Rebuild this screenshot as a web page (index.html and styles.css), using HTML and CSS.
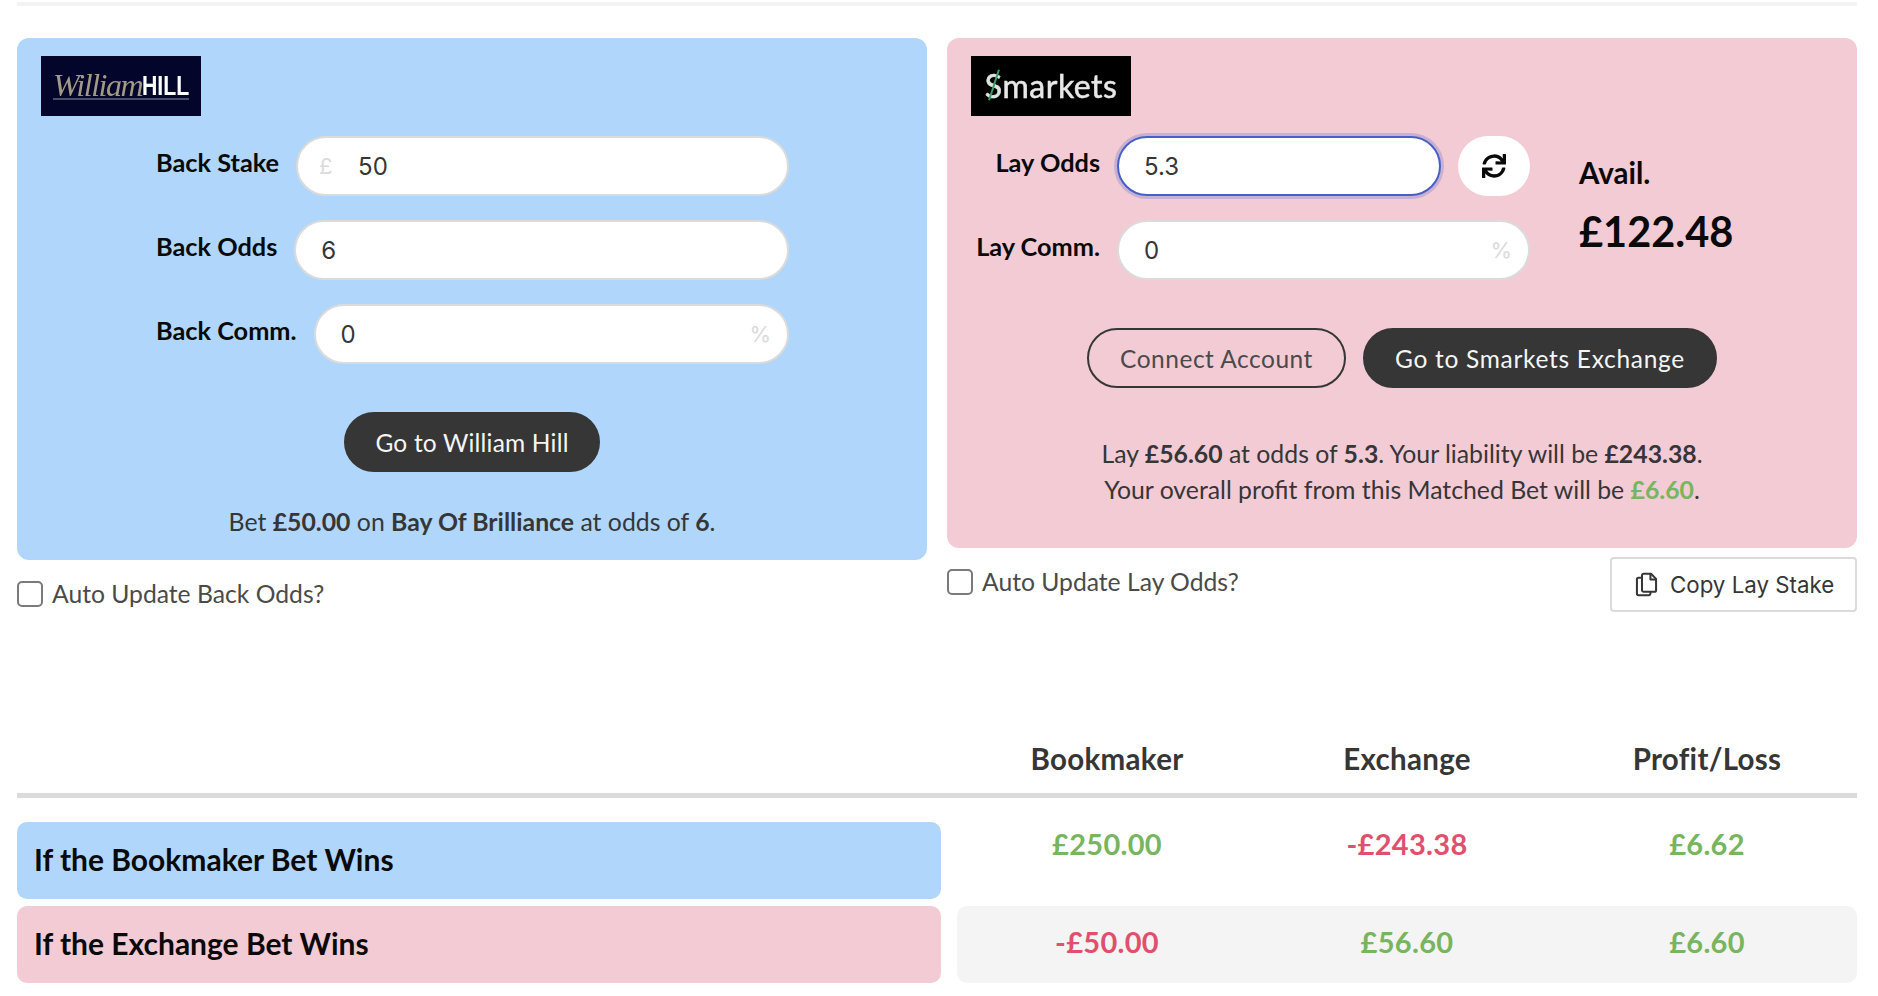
FILE: index.html
```html
<!DOCTYPE html>
<html lang="en">
  <head>
    <meta charset="UTF-8" />
    <meta name="viewport" content="width=device-width, initial-scale=1.0" />
    <title>Matched Bet Calculator</title>
    <link rel="stylesheet" href="styles.css">
  </head>
  <body>
    <div class="page">
      <div class="topRule"></div>

      <div class="calc">
        <!-- bookmaker side -->
        <div class="side">
          <div class="card cardBack">
            <div class="logo logoHill">
              <span class="hillScript">William</span><span class="hillBold"><span class="hillSquash">HILL</span></span>
            </div>
            <div class="backForm">
              <div class="field">
                <label class="fieldLabel">Back Stake</label>
                <div class="control">
                  <span class="affix affixLeft">£</span>
                  <input class="input inputPound" value="50" />
                </div>
              </div>
              <div class="field">
                <label class="fieldLabel">Back Odds</label>
                <div class="control">
                  <input class="input" value="6" />
                </div>
              </div>
              <div class="field">
                <label class="fieldLabel">Back Comm.</label>
                <div class="control">
                  <input class="input" value="0" />
                  <span class="affix affixRight">%</span>
                </div>
              </div>
            </div>
            <div class="actions actionsBack">
              <button class="btn btnDark btnHill">Go to William Hill</button>
            </div>
            <p class="summary summaryBack">Bet <b>£50.00</b> on <b>Bay Of Brilliance</b> at odds of <b>6</b>.</p>
          </div>
          <label class="check checkBack">
            <input type="checkbox" class="checkBox" />
            <span>Auto Update Back Odds?</span>
          </label>
        </div>

        <!-- exchange side -->
        <div class="side">
          <div class="card cardLay">
            <div class="logo logoSmarkets"><span class="smS">S<span class="smSlash"></span></span>markets</div>
            <div class="layTop">
              <div class="layForm">
                <div class="field">
                  <label class="fieldLabel layLabel">Lay Odds</label>
                  <div class="control">
                    <input class="input inputFocus" value="5.3" />
                  </div>
                  <button class="refresh" aria-label="Refresh">
                    <svg viewBox="0 0 512 512" width="24" height="24"><path fill="#0a0a0a" d="M440.65 12.57l4 82.77A247.16 247.16 0 0 0 255.83 8C134.73 8 33.91 94.92 12.29 209.82A12 12 0 0 0 24.09 224h49.05a12 12 0 0 0 11.67-9.26 175.91 175.91 0 0 1 317-56.94l-101.46-4.86a12 12 0 0 0-12.57 12v47.41a12 12 0 0 0 12 12H500a12 12 0 0 0 12-12V12a12 12 0 0 0-12-12h-47.37a12 12 0 0 0-11.98 12.57zM255.83 432a175.61 175.61 0 0 1-146-77.8l101.8 4.87a12 12 0 0 0 12.57-12v-47.4a12 12 0 0 0-12-12H12a12 12 0 0 0-12 12V500a12 12 0 0 0 12 12h47.35a12 12 0 0 0 12-12.6l-4.15-82.57A247.17 247.17 0 0 0 255.83 504c121.11 0 221.93-86.92 243.55-201.82a12 12 0 0 0-11.8-14.18h-49.05a12 12 0 0 0-11.67 9.26A175.86 175.86 0 0 1 255.83 432z"/></svg>
                  </button>
                </div>
                <div class="field">
                  <label class="fieldLabel layLabel">Lay Comm.</label>
                  <div class="control">
                    <input class="input" value="0" />
                    <span class="affix affixRight">%</span>
                  </div>
                </div>
              </div>
              <div class="avail">
                <div class="availLabel">Avail.</div>
                <div class="availValue">£122.48</div>
              </div>
            </div>
            <div class="actions actionsLay">
              <button class="btn btnOutline btnConnect">Connect Account</button>
              <button class="btn btnDark btnExchange">Go to Smarkets Exchange</button>
            </div>
            <p class="summary summaryLay">Lay <b>£56.60</b> at odds of <b>5.3</b>. Your liability will be <b>£243.38</b>.<br />Your overall profit from this Matched Bet will be <b class="pos">£6.60</b>.</p>
          </div>
          <div class="layFoot">
            <label class="check">
              <input type="checkbox" class="checkBox" />
              <span>Auto Update Lay Odds?</span>
            </label>
            <button class="copyBtn">
              <svg viewBox="0 0 24 24" width="27" height="27" fill="none" stroke="#363636" stroke-width="1.800" stroke-linejoin="round"><path d="M9.500 2.500h6.500l4.500 4.500v10a1.500 1.500 0 0 1-1.500 1.500H9.500A1.500 1.500 0 0 1 8 17V4a1.500 1.500 0 0 1 1.500-1.500z"/><path d="M15.500 2.500v5h5"/><path d="M8 6H5a1.500 1.500 0 0 0-1.500 1.500V20A1.500 1.500 0 0 0 5 21.500h9a1.500 1.500 0 0 0 1.500-1.500v-1.500"/></svg>
              <span>Copy Lay Stake</span>
            </button>
          </div>
        </div>
      </div>

      <div class="results">
        <div class="resultsHead">
          <div></div>
          <div class="headCell">Bookmaker</div>
          <div class="headCell">Exchange</div>
          <div class="headCell">Profit/Loss</div>
        </div>
        <div class="resultRow">
          <div class="rowName rowBack">If the Bookmaker Bet Wins</div>
          <div class="rowVals">
            <div class="val pos">£250.00</div>
            <div class="val neg">-£243.38</div>
            <div class="val pos">£6.62</div>
          </div>
        </div>
        <div class="resultRow">
          <div class="rowName rowLay">If the Exchange Bet Wins</div>
          <div class="rowVals rowGrey">
            <div class="val neg">-£50.00</div>
            <div class="val pos">£56.60</div>
            <div class="val pos">£6.60</div>
          </div>
        </div>
      </div>
    </div>
  </body>
</html>
```

FILE: styles.css
```css
* {
  box-sizing: border-box;
}
body {
  margin: 0;
  background: #fff;
  font-family: "Lato", "Liberation Sans", sans-serif;
  color: #363636;
}
.page {
  padding: 2px 21px 0 17px;
}
.topRule {
  height: 4px;
  background: #f3f3f3;
}
.calc {
  display: grid;
  grid-template-columns: 910px 910px;
  column-gap: 20px;
  margin-top: 32px;
  align-items: start;
}
.card {
  border-radius: 12px;
  padding: 18px 24px 0;
}
.cardBack {
  background: #b0d6fb;
  height: 522px;
}
.cardLay {
  background: #f2cbd5;
  height: 510px;
}

/* logos */
.logo {
  width: 160px;
  height: 60px;
  display: flex;
  align-items: center;
  justify-content: center;
}
.logoHill {
  background: #03052a;
  filter: blur(0.7px);
}
.hillScript {
  font-family: "Liberation Serif", serif;
  font-style: italic;
  font-size: 32px;
  letter-spacing: -1.5px;
  color: #a39a86;
  border-bottom: 2px solid #4d4f63;
  line-height: 25px;
  height: 27px;
}
.hillBold {
  width: 47px;
  font-family: "Liberation Sans", sans-serif;
  font-weight: bold;
  font-size: 28px;
  color: #fff;
  border-bottom: 2px solid #4d4f63;
  line-height: 25px;
  height: 27px;
}
.hillSquash {
  display: inline-block;
  transform: scaleX(0.76);
  transform-origin: left center;
}
.logoSmarkets {
  background: #000;
  padding-bottom: 2px;
  font-family: "Lato", sans-serif;
  font-size: 32px;
  color: #e8e8e8;
  letter-spacing: 0.5px;
  -webkit-text-stroke: 0.5px #e8e8e8;
  filter: blur(0.7px);
}
.smS {
  position: relative;
  color: #d9e8df;
}
.smSlash {
  position: absolute;
  left: 8px;
  top: 3px;
  width: 2px;
  height: 32px;
  background: #3f9a6a;
  transform: rotate(18deg);
}

/* form rows */
.backForm {
  width: 633px;
  margin: 20px 0 0 115px;
}
.field {
  display: flex;
  align-items: center;
  gap: 17px;
  margin-bottom: 24px;
}
.fieldLabel {
  font-weight: 700;
  font-size: 25.3px;
  color: #0a0a0a;
  white-space: nowrap;
  padding-bottom: 8px;
}
.control {
  position: relative;
  flex: 1;
}
.input {
  display: block;
  width: 100%;
  height: 60px;
  padding: 0 25px;
  border: 2px solid #dbdbdb;
  border-radius: 30px;
  background: #fff;
  font-family: "Inter", sans-serif;
  font-size: 24px;
  color: #363636;
  outline: none;
}
.inputPound {
  padding-left: 60px;
}
.inputFocus {
  border-color: #485fc7;
  box-shadow: 0 0 0 3px rgba(72, 95, 199, 0.25);
}
.affix {
  position: absolute;
  top: 0;
  height: 60px;
  display: flex;
  align-items: center;
  font-family: "Inter", sans-serif;
  font-size: 22px;
  color: #dbdbdb;
}
.affixLeft {
  left: 23px;
}
.affixRight {
  right: 18px;
}
.actions {
  display: flex;
  justify-content: center;
  gap: 17px;
}
.actionsBack {
  margin-top: 48px;
}
.actionsLay {
  margin: 24px 0 0;
}
.btn {
  height: 60px;
  padding: 0;
  border-radius: 30px;
  font-family: "Lato", sans-serif;
  font-size: 24.5px;
  letter-spacing: 0.5px;
  cursor: pointer;
}
.btnHill {
  width: 256px;
  letter-spacing: 0.2px;
}
.btnConnect {
  width: 259px;
}
.btnExchange {
  width: 354px;
  letter-spacing: 0.7px;
}
.btnDark {
  background: #363636;
  border: 2px solid #363636;
  color: #f5f5f5;
}
.btnOutline {
  background: transparent;
  border: 2px solid #363636;
  color: #4a4a4a;
}
.summary {
  margin: 0;
  text-align: center;
  font-size: 24.8px;
  line-height: 36px;
  color: #363636;
}
.summary b {
  font-weight: 700;
}
.summaryBack {
  margin-top: 32px;
}
.summaryLay {
  margin-top: 48px;
}

/* exchange top */
.layTop {
  display: flex;
  margin-top: 20px;
}
.layForm {
  width: 559px;
}
.layLabel {
  width: 129px;
  text-align: right;
}
.refresh {
  width: 72px;
  height: 60px;
  flex: none;
  border: 0;
  border-radius: 30px;
  background: #fff;
  display: flex;
  align-items: center;
  justify-content: center;
}
.avail {
  margin: 19px 0 0 49px;
  color: #0a0a0a;
}
.availLabel {
  font-size: 29.5px;
  font-weight: 700;
}
.availValue {
  margin-top: 16px;
  font-size: 41.5px;
  font-weight: 700;
}

/* checkboxes under the cards */
.check {
  display: flex;
  align-items: center;
  gap: 9px;
  font-size: 24.7px;
  color: #4a4a4a;
}
.checkBack {
  margin-top: 19px;
}
.checkBox {
  appearance: none;
  width: 26px;
  height: 26px;
  margin: 0;
  border: 2px solid #7a7a7a;
  border-radius: 5px;
  background: #fff;
}
.layFoot {
  display: flex;
  justify-content: space-between;
  align-items: flex-start;
  margin-top: 9px;
}
.layFoot .check {
  margin-top: 10px;
}
.copyBtn {
  display: flex;
  align-items: center;
  gap: 10px;
  height: 55px;
  width: 247px;
  padding: 0 0 0 21px;
  border: 2px solid #dbdbdb;
  border-radius: 4px;
  background: #fff;
  font-family: "Inter", sans-serif;
  font-size: 22.3px;
  color: #363636;
}

/* results table */
.results {
  margin-top: 133px;
}
.resultsHead {
  display: grid;
  grid-template-columns: 940px repeat(3, 1fr);
  height: 53px;
  padding-top: 1px;
  border-bottom: 5px solid #dbdbdb;
}
.headCell {
  text-align: center;
  font-size: 29.5px;
  font-weight: 700;
  line-height: 26px;
  letter-spacing: 0.3px;
}
.resultRow {
  display: grid;
  grid-template-columns: 924px 900px;
  column-gap: 16px;
  margin-top: 7px;
}
.resultsHead + .resultRow {
  margin-top: 24px;
}
.rowName {
  height: 77px;
  padding: 0 0 3px 17px;
  display: flex;
  align-items: center;
  border-radius: 10px;
  font-size: 30px;
  font-weight: 700;
  color: #0a0a0a;
}
.rowBack {
  background: #b0d6fb;
}
.rowLay {
  background: #f2cbd5;
}
.rowVals {
  display: grid;
  grid-template-columns: repeat(3, 1fr);
  border-radius: 10px;
  padding-top: 4px;
}
.rowGrey {
  background: #f4f4f4;
  padding-top: 18px;
}
.val {
  text-align: center;
  font-size: 29px;
  font-weight: 700;
  letter-spacing: 0.3px;
}
.pos {
  color: #77b55f;
}
.neg {
  color: #e0506c;
}
```
